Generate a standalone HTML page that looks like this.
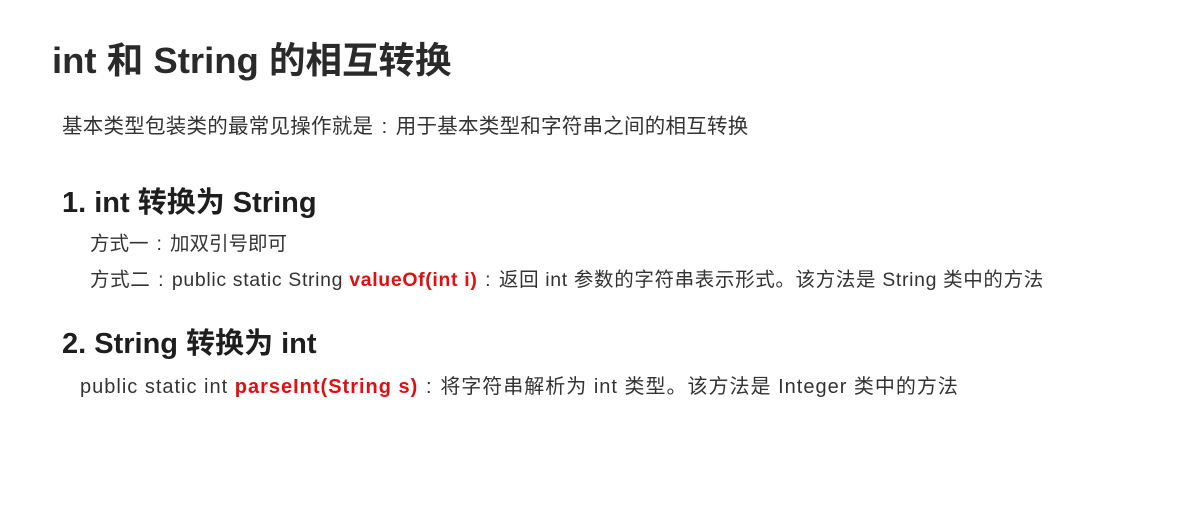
<!DOCTYPE html>
<html><head><meta charset="utf-8"><style>
body{margin:0;width:1180px;height:517px;background:#fff;position:relative;overflow:hidden;font-family:"Liberation Sans","Noto Sans CJK SC",sans-serif;color:#222}
div{position:absolute;white-space:nowrap;line-height:1}
.r{color:#e01010;font-weight:bold}
.c{display:inline-block;width:1.1em;text-align:center}
</style></head><body>
<div style="left:52px;top:43px;font-size:36.5px;font-weight:bold;color:#2a2a2a">int 和 String 的相互转换</div>
<div style="left:62px;top:117px;font-size:20.5px;color:#333;letter-spacing:0.25px">基本类型包装类的最常见操作就是<span class="c">:</span>用于基本类型和字符串之间的相互转换</div>
<div style="left:62px;top:189px;font-size:29px;font-weight:bold;color:#1e1e1e">1. int 转换为 String</div>
<div style="left:90px;top:235px;font-size:19.5px;color:#333">方式一<span class="c">:</span>加双引号即可</div>
<div style="left:90px;top:271px;font-size:19.5px;color:#333;letter-spacing:0.65px">方式二<span class="c">:</span>public static String <span class="r">valueOf(int i)</span><span class="c">:</span>返回 int 参数的字符串表示形式。该方法是 String 类中的方法</div>
<div style="left:62px;top:330px;font-size:29px;font-weight:bold;color:#1e1e1e">2. String 转换为 int</div>
<div style="left:80px;top:377px;font-size:20px;color:#333;letter-spacing:1px">public static int <span class="r">parseInt(String s)</span><span class="c">:</span>将字符串解析为 int 类型。该方法是 Integer 类中的方法</div>
</body></html>
